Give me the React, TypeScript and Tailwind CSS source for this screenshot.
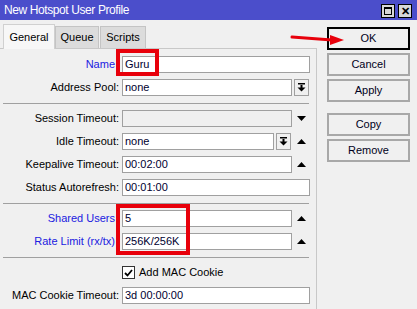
import React from "react";

const font = { fontFamily: '"Liberation Sans", Arial, sans-serif' };

function DropIcon() {
  return (
    <svg width="9" height="9" viewBox="0 0 9 9">
      <rect x="1" y="0" width="7" height="1.5" fill="#000" />
      <rect x="3.5" y="2" width="2" height="3" fill="#000" />
      <polygon points="0.5,4.5 8.5,4.5 4.5,8.5" fill="#000" />
    </svg>
  );
}

function Tri({ up }: { up?: boolean }) {
  return (
    <svg width="9" height="5" viewBox="0 0 9 5">
      <polygon points={up ? "0,5 9,5 4.5,0" : "0,0 9,0 4.5,5"} fill="#000" />
    </svg>
  );
}

function Label({ text, blue }: { text: string; blue?: boolean }) {
  return (
    <div
      className={`w-[119px] text-right whitespace-nowrap ${
        blue ? "text-[#2020e0] pr-[4px]" : "text-black"
      }`}
    >
      {text}
    </div>
  );
}

function Field({
  value = "",
  disabled,
  width = "w-[188px]",
}: {
  value?: string;
  disabled?: boolean;
  width?: string;
}) {
  return (
    <div
      className={`h-[17px] ${width} border border-[#a0a0a0] flex items-center pl-[2px] text-[#000030] ${
        disabled ? "bg-[#f0f0f0]" : "bg-white"
      }`}
    >
      {value}
    </div>
  );
}

function Row({ children }: { children: React.ReactNode }) {
  return <div className="flex items-center h-[17px] gap-[3px]">{children}</div>;
}

function Sep() {
  return <div className="h-px bg-[#a0a0a0] ml-[3px] mr-[7px] mt-[7px] mb-[6px]" />;
}

function Btn({ text, primary }: { text: string; primary?: boolean }) {
  return (
    <div
      className={`w-[83px] h-[23px] flex items-center justify-center text-[11px] text-[#000020] bg-[#f0f0f0] ${
        primary ? "border-2 border-black" : "border-2 border-[#a8a8a8]"
      }`}
    >
      {text}
    </div>
  );
}

export default function App() {
  return (
    <div className="w-[417px] h-[309px] bg-[#f0f0f0] relative overflow-hidden text-[11px]" style={font}>
      {/* title bar */}
      <div className="h-[20px] bg-[#4b4ecb] flex items-center justify-between pl-[4px] pr-[5px]">
        <span className="text-white text-[12px] tracking-[-0.4px]">New Hotspot User Profile</span>
        <div className="flex gap-[3px] mt-[2px]">
          <div className="w-[14px] h-[14px] bg-[#d8d8d8] border border-black flex items-center justify-center">
            <div className="w-[8px] h-[8px] border border-black border-t-2" />
          </div>
          <div className="w-[14px] h-[14px] bg-[#d8d8d8] border border-black flex items-center justify-center text-[11px] font-bold leading-none">
            ✕
          </div>
        </div>
      </div>

      <div className="flex">
        {/* left: tabs + panel */}
        <div className="w-[317px]">
          <div className="h-[28px] flex items-end pl-[3px]">
            <div className="w-[52px] h-[25px] bg-[#f7f7f7] border border-b-0 border-[#d0d0d0] flex items-center justify-center relative top-px">
              General
            </div>
            <div className="w-[44px] h-[22px] bg-[#dcdcdc] border border-b-0 border-[#c4c4c4] flex items-center justify-center">
              Queue
            </div>
            <div className="w-[46px] h-[22px] ml-px bg-[#dcdcdc] border border-b-0 border-[#c4c4c4] flex items-center justify-center">
              Scripts
            </div>
          </div>
          <div className="border-t border-r border-[#c8c8c8] h-[261px] pt-[7px]">
            <div className="flex flex-col gap-[6px]">
              <Row>
                <Label text="Name" blue />
                <Field value="Guru" />
              </Row>
              <Row>
                <Label text="Address Pool:" />
                <Field value="none" width="w-[170px]" />
                <div className="w-[15px] h-[17px] border border-[#a0a0a0] flex items-center justify-center -ml-[1px]">
                  <DropIcon />
                </div>
              </Row>
            </div>
            <Sep />
            <div className="flex flex-col gap-[6px]">
              <Row>
                <Label text="Session Timeout:" />
                <Field disabled width="w-[170px]" />
                <div className="w-[15px] flex justify-center -ml-[1px]">
                  <Tri />
                </div>
              </Row>
              <Row>
                <Label text="Idle Timeout:" />
                <Field value="none" width="w-[152px]" />
                <div className="w-[15px] h-[17px] border border-[#a0a0a0] flex items-center justify-center -ml-[1px]">
                  <DropIcon />
                </div>
                <div className="w-[14px] flex justify-center">
                  <Tri up />
                </div>
              </Row>
              <Row>
                <Label text="Keepalive Timeout:" />
                <Field value="00:02:00" width="w-[170px]" />
                <div className="w-[15px] flex justify-center -ml-[1px]">
                  <Tri up />
                </div>
              </Row>
              <Row>
                <Label text="Status Autorefresh:" />
                <Field value="00:01:00" />
              </Row>
            </div>
            <Sep />
            <div className="flex flex-col gap-[6px]">
              <Row>
                <Label text="Shared Users" blue />
                <Field value="5" width="w-[170px]" />
                <div className="w-[15px] flex justify-center -ml-[1px]">
                  <Tri up />
                </div>
              </Row>
              <Row>
                <Label text="Rate Limit (rx/tx)" blue />
                <Field value="256K/256K" width="w-[170px]" />
                <div className="w-[15px] flex justify-center -ml-[1px]">
                  <Tri up />
                </div>
              </Row>
            </div>
            <Sep />
            <div className="flex flex-col gap-[6px]">
              <Row>
                <div className="w-[119px]" />
                <div className="w-[13px] h-[13px] bg-white border border-[#333] flex items-center justify-center">
                  <svg width="9" height="8" viewBox="0 0 9 8">
                    <polyline points="1,4 3.5,6.5 8,1" fill="none" stroke="#000" strokeWidth="1.8" />
                  </svg>
                </div>
                <span className="ml-[1px]">Add MAC Cookie</span>
              </Row>
              <Row>
                <Label text="MAC Cookie Timeout:" />
                <Field value="3d 00:00:00" />
              </Row>
            </div>
          </div>
        </div>

        {/* right: buttons */}
        <div className="ml-[10px] pt-[7px] flex flex-col gap-[3px]">
          <Btn text="OK" primary />
          <Btn text="Cancel" />
          <Btn text="Apply" />
          <div className="h-[5px]" />
          <Btn text="Copy" />
          <Btn text="Remove" />
        </div>
      </div>

      {/* red highlight annotations */}
      <div className="absolute left-[116px] top-[49px] w-[43px] h-[27px] border-4 border-[#e8000b]" />
      <div className="absolute left-[116px] top-[204px] w-[74px] h-[51px] border-4 border-[#e8000b]" />
      <svg className="absolute left-[290px] top-[32px]" width="56" height="14" viewBox="0 0 56 14">
        <line x1="2" y1="5" x2="42" y2="8" stroke="#e8000b" strokeWidth="3" strokeLinecap="round" />
        <polygon points="40,3 54,8 40,13" fill="#e8000b" />
      </svg>
    </div>
  );
}
